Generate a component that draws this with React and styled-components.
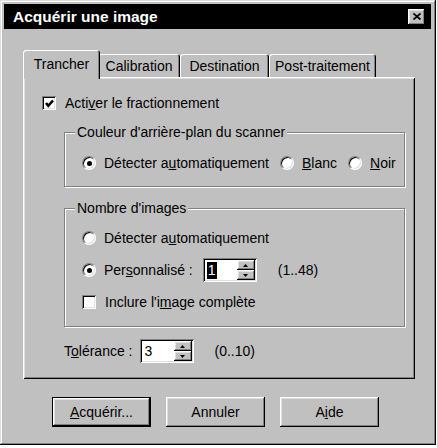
import React from 'react';
import styled, { createGlobalStyle, css } from 'styled-components';

const GlobalStyle = createGlobalStyle`
  html, body { margin: 0; padding: 0; background: #fff; }
  body {
    font-family: "Liberation Sans", Arial, sans-serif;
    font-size: 14px;
    color: #000;
  }
  * { box-sizing: border-box; }
`;

const raised = css`
  box-shadow: inset -1px -1px #000, inset 1px 1px #fff, inset -2px -2px #808080, inset 2px 2px #dfdfdf;
`;
const sunken = css`
  box-shadow: inset 1px 1px #808080, inset -1px -1px #fff, inset 2px 2px #000, inset -2px -2px #dfdfdf;
`;

const Window = styled.div`
  width: 436px;
  height: 445px;
  background: #c0c0c0;
  box-shadow: inset -1px -1px #000, inset 1px 1px #dfdfdf, inset -2px -2px #808080, inset 2px 2px #fff;
  padding: 4px 5px 4px 4px;
  display: flex;
  flex-direction: column;
`;

const TitleBar = styled.div`
  height: 25px;
  background: #000;
  display: flex;
  align-items: center;
  justify-content: space-between;
  padding: 0 6px 0 9px;
`;

const Title = styled.span`
  color: #fff;
  font-weight: bold;
  font-size: 15.5px;
`;

const CloseButton = styled.button`
  width: 17px;
  height: 16px;
  border: none;
  padding: 0;
  background: #c0c0c0;
  ${raised};
  display: flex;
  align-items: center;
  justify-content: center;
`;

const Body = styled.div`
  padding: 21px 16px 0 19px;
  display: flex;
  flex-direction: column;
`;

const TabStrip = styled.div`
  display: flex;
  align-items: flex-end;
  height: 27px;
  padding-left: 2px;
  position: relative;
  z-index: 1;
`;

const Tab = styled.div`
  width: ${(p) => p.$w}px;
  height: ${(p) => (p.$active ? 29 : 23)}px;
  margin: ${(p) => (p.$active ? '0 -2px -2px' : '0')};
  padding-bottom: ${(p) => (p.$active ? 2 : 0)}px;
  position: relative;
  z-index: ${(p) => (p.$active ? 2 : 1)};
  background: #c0c0c0;
  border-radius: 3px 3px 0 0;
  box-shadow: inset 1px 1px #fff, inset -1px 0 #000, inset -2px 0 #808080;
  display: flex;
  align-items: center;
  justify-content: center;
  white-space: nowrap;
`;

const Panel = styled.div`
  background: #c0c0c0;
  box-shadow: inset 1px 1px #fff, inset -1px -1px #000, inset 2px 2px #dfdfdf, inset -2px -2px #808080;
  padding: 18px 10px 16px 19px;
  display: flex;
  flex-direction: column;
`;

const Row = styled.div`
  display: flex;
  align-items: center;
  height: ${(p) => p.$h || 16}px;
  margin-left: ${(p) => p.$indent || 0}px;
  margin-top: ${(p) => p.$mt || 0}px;
  white-space: nowrap;
`;

const Check = styled.span`
  width: 14px;
  height: 14px;
  flex: none;
  background: #fff;
  ${sunken};
  display: flex;
  align-items: center;
  justify-content: center;
  margin-right: 9px;
`;

const RadioCircle = styled.span`
  width: 14px;
  height: 14px;
  flex: none;
  border-radius: 50%;
  background: #fff;
  border: 1px solid;
  border-color: #808080 #fff #fff #808080;
  box-shadow: inset 1px 1px #000, inset -1px -1px #dfdfdf;
  display: flex;
  align-items: center;
  justify-content: center;
  margin-right: 8px;
  &::after {
    content: '';
    width: 5px;
    height: 5px;
    border-radius: 50%;
    background: ${(p) => (p.$on ? '#000' : 'transparent')};
  }
`;

const Option = styled.label`
  display: flex;
  align-items: center;
  margin-right: ${(p) => p.$gap || 0}px;
`;

const U = styled.span`
  text-decoration: underline;
`;

const Group = styled.fieldset`
  margin: ${(p) => p.$mt}px 0 0 22px;
  padding: ${(p) => p.$pt}px 6px ${(p) => p.$pb}px 17px;
  border: 1px solid #808080;
  box-shadow: 1px 1px 0 #fff, inset 1px 1px 0 #fff;
  display: flex;
  flex-direction: column;
  gap: 12px;
  min-width: 0;
`;

const Legend = styled.legend`
  margin-left: -7px;
  padding: 0 2px;
  line-height: 16px;
  background: #c0c0c0;
`;

const Spin = styled.div`
  width: 54px;
  height: 24px;
  flex: none;
  background: #fff;
  ${sunken};
  padding: 2px;
  display: flex;
  margin-left: ${(p) => p.$ml}px;
`;

const SpinValue = styled.div`
  flex: 1;
  display: flex;
  align-items: center;
  padding-left: 2px;
`;

const Selected = styled.span`
  background: ${(p) => (p.$sel ? '#000' : 'transparent')};
  color: ${(p) => (p.$sel ? '#fff' : '#000')};
  padding: 0 1px;
  line-height: 17px;
`;

const SpinButtons = styled.div`
  width: 18px;
  display: flex;
  flex-direction: column;
`;

const SpinBtn = styled.div`
  flex: 1;
  background: #c0c0c0;
  ${raised};
  display: flex;
  align-items: center;
  justify-content: center;
`;

const Range = styled.span`
  margin-left: 21px;
`;

const ButtonRow = styled.div`
  display: flex;
  gap: 15px;
  padding-left: 29px;
  margin-top: 18px;
`;

const Button = styled.button`
  width: 99px;
  height: 30px;
  font: inherit;
  color: #000;
  background: #c0c0c0;
  padding: 0;
  border: ${(p) => (p.$default ? '1px solid #000' : 'none')};
  ${raised};
`;

const Arrow = ({ up }) => (
  <svg width="5" height="3" viewBox="0 0 5 3">
    <polygon points={up ? '2.5,0 5,3 0,3' : '0,0 5,0 2.5,3'} fill="#000" />
  </svg>
);

const SpinBox = ({ value, selected, ml }) => (
  <Spin $ml={ml}>
    <SpinValue>
      <Selected $sel={selected}>{value}</Selected>
    </SpinValue>
    <SpinButtons>
      <SpinBtn><Arrow up /></SpinBtn>
      <SpinBtn><Arrow /></SpinBtn>
    </SpinButtons>
  </Spin>
);

const CheckMark = () => (
  <svg width="9" height="9" viewBox="0 0 9 9">
    <polyline points="1,4 3.3,6.8 8,1.5" fill="none" stroke="#000" strokeWidth="2.6" />
  </svg>
);

const tabs = [
  { label: 'Trancher', w: 77, active: true },
  { label: 'Calibration', w: 82 },
  { label: 'Destination', w: 89 },
  { label: 'Post-traitement', w: 107 },
];

export default function App() {
  return (
    <>
      <GlobalStyle />
      <Window>
        <TitleBar>
          <Title>Acquérir une image</Title>
          <CloseButton aria-label="Fermer">
            <svg width="8" height="7" viewBox="0 0 8 7">
              <path d="M0.5 0.5 L7.5 6.5 M7.5 0.5 L0.5 6.5" stroke="#000" strokeWidth="1.8" />
            </svg>
          </CloseButton>
        </TitleBar>
        <Body>
          <TabStrip>
            {tabs.map((t) => (
              <Tab key={t.label} $w={t.w} $active={t.active}>
                {t.label}
              </Tab>
            ))}
          </TabStrip>
          <Panel>
            <Row>
              <Check><CheckMark /></Check>
              <span>Acti<U>v</U>er le fractionnement</span>
            </Row>
            <Group $mt={13} $pt={15} $pb={15}>
              <Legend>Couleur d'arrière-plan du scanner</Legend>
              <Row>
                <Option $gap={11}>
                  <RadioCircle $on />
                  <span>Détecter a<U>u</U>tomatiquement</span>
                </Option>
                <Option $gap={11}>
                  <RadioCircle />
                  <span><U>B</U>lanc</span>
                </Option>
                <Option>
                  <RadioCircle />
                  <span><U>N</U>oir</span>
                </Option>
              </Row>
            </Group>
            <Group $mt={13} $pt={14} $pb={16}>
              <Legend>Nombre d'images</Legend>
              <Row>
                <Option>
                  <RadioCircle />
                  <span>Détecter a<U>u</U>tomatiquement</span>
                </Option>
              </Row>
              <Row $h={24}>
                <Option>
                  <RadioCircle $on />
                  <span>Per<U>s</U>onnalisé :</span>
                </Option>
                <SpinBox value="1" selected ml={10} />
                <Range>(1..48)</Range>
              </Row>
              <Row>
                <Check />
                <span>Inclure l'i<U>m</U>age complète</span>
              </Row>
            </Group>
            <Row $h={24} $indent={22} $mt={12}>
              <span>T<U>o</U>lérance :</span>
              <SpinBox value="3" ml={7} />
              <Range>(0..10)</Range>
            </Row>
          </Panel>
          <ButtonRow>
            <Button $default><U>A</U>cquérir...</Button>
            <Button>Annuler</Button>
            <Button>A<U>i</U>de</Button>
          </ButtonRow>
        </Body>
      </Window>
    </>
  );
}
